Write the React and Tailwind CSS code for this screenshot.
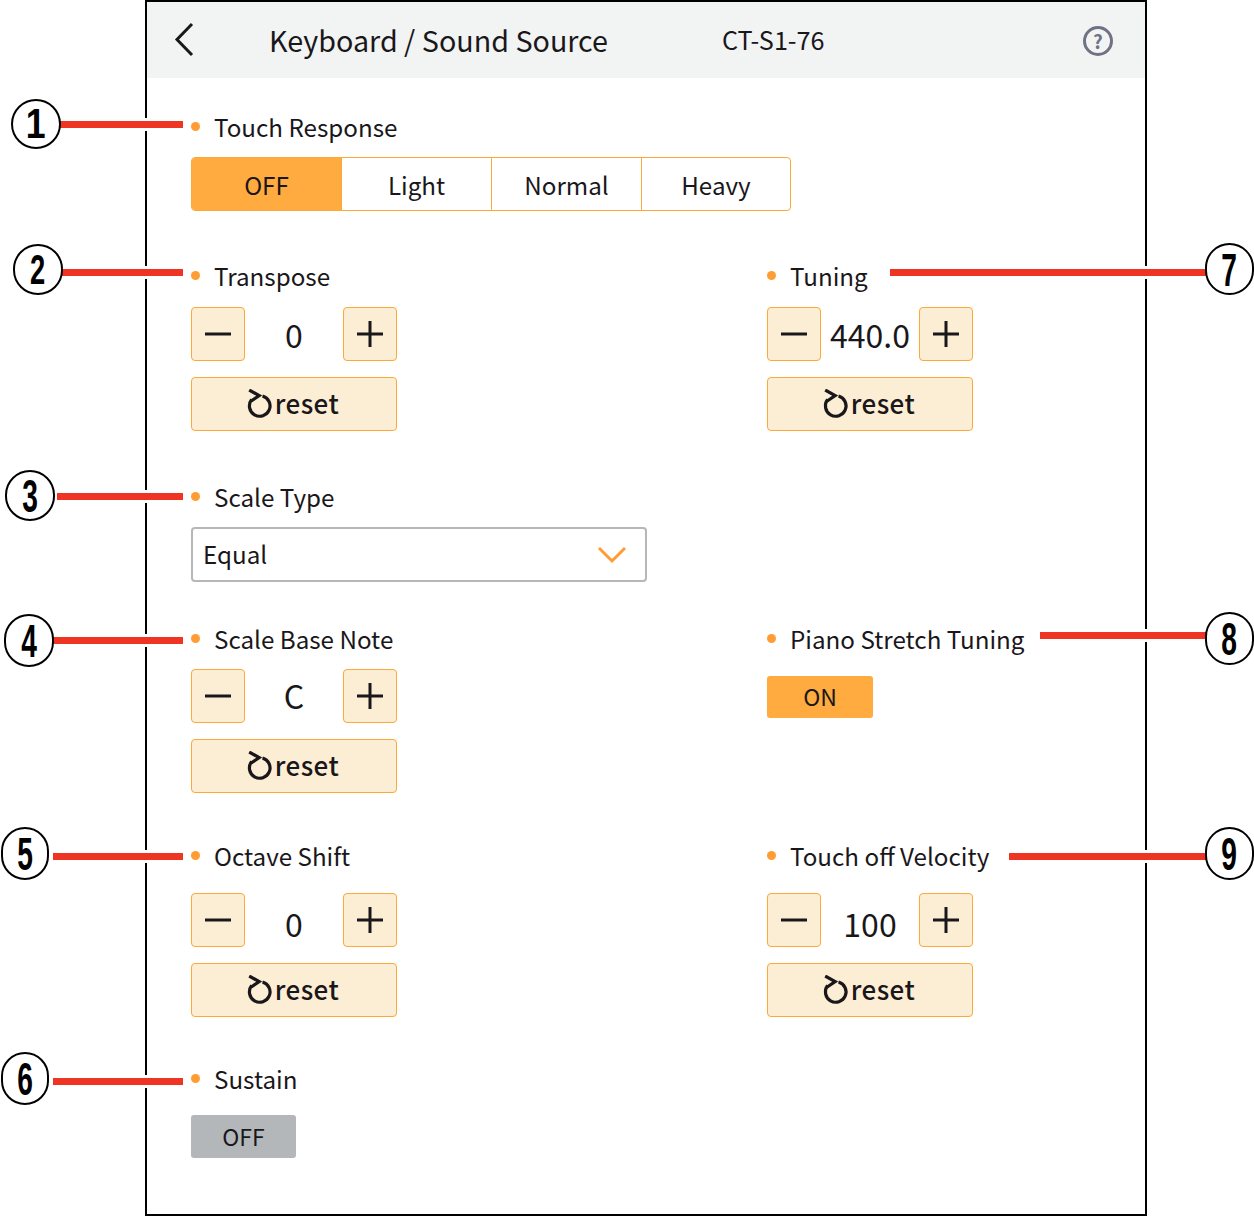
const FONT = "font-['Noto_Sans_CJK_JP','Noto_Sans',sans-serif]";

function Label({ children }) {
    return (
        <div className="flex h-[28px] items-center">
            <span className="mb-[4px] h-[9px] w-[9px] rounded-full bg-[#ff9c33]" />
            <span className="mb-[1px] ml-[14px] text-[24.2px] leading-none whitespace-nowrap">{children}</span>
        </div>
    );
}

function MinusIcon() {
    return (
        <svg width="28" height="28" viewBox="0 0 28 28" className="text-[#1a171b]">
            <path d="M1 14H27" stroke="currentColor" strokeWidth="3" fill="none" />
        </svg>
    );
}

function PlusIcon() {
    return (
        <svg width="28" height="28" viewBox="0 0 28 28" className="text-[#1a171b]">
            <path d="M1 14H27M14 1V27" stroke="currentColor" strokeWidth="3" fill="none" />
        </svg>
    );
}

function ResetIcon() {
    return (
        <svg width="26" height="30" viewBox="0 0 26 30" className="text-[#1a171b]">
            <path d="M4.6 10.6A10.3 10.3 0 1 0 15.5 7" stroke="currentColor" strokeWidth="3.2" fill="none" />
            <path d="M2.2 1L12.2 6.6L4.2 12" stroke="currentColor" strokeWidth="3.2" fill="none" />
        </svg>
    );
}

function Stepper({ value, valueClass = "" }) {
    return (
        <div className="w-[206px]">
            <div className="flex h-[54px] items-center justify-between">
                <button className="flex h-[54px] w-[54px] items-center justify-center rounded-[4px] border border-[#faa93a] bg-[#fceed5]">
                    <MinusIcon />
                </button>
                <span className={`text-[32px] leading-none ${valueClass}`}>{value}</span>
                <button className="flex h-[54px] w-[54px] items-center justify-center rounded-[4px] border border-[#faa93a] bg-[#fceed5]">
                    <PlusIcon />
                </button>
            </div>
            <button className="mt-[16px] flex h-[54px] w-[206px] items-center justify-center rounded-[4px] border border-[#faa93a] bg-[#fceed5]">
                <ResetIcon />
                <span className="mr-[2px] mb-[2px] ml-[2px] text-[26px] leading-none font-medium tracking-[0.4px]">reset</span>
            </button>
        </div>
    );
}

function Callout({ n, circle, line, digit }) {
    return (
        <>
            <div className={`absolute box-content h-[7px] border-y-[3px] border-white bg-[#ee3524] ${line}`} />
            <div className={`absolute flex items-center justify-center rounded-full border-2 border-black bg-white ${circle}`}>
                <span className={`font-['Liberation_Sans',sans-serif] leading-none font-bold text-black ${digit}`}>{n}</span>
            </div>
        </>
    );
}

export default function App() {
    return (
        <div className={`relative h-[1216px] w-[1254px] overflow-hidden bg-white text-[#1a171b] ${FONT}`}>
            <div className="ml-[145px] h-[1216px] w-[1002px] border-2 border-black">
                <header className="flex h-[76px] items-center bg-[#f2f4f4]">
                    <svg width="24" height="36" viewBox="0 0 24 36" className="ml-[25px]">
                        <path d="M20 2L5 17.5L20 33" stroke="#1a171b" strokeWidth="3" fill="none" />
                    </svg>
                    <h1 className="ml-[73px] w-[453px] text-[28.7px] leading-none font-normal whitespace-nowrap">Keyboard / Sound Source</h1>
                    <span className="text-[25.2px] leading-none">CT-S1-76</span>
                    <span className="mt-[1px] mr-[32px] ml-auto flex h-[30px] w-[30px] items-center justify-center rounded-full border-[3px] border-[#6f7285] text-[19px] leading-none font-bold text-[#6f7285]">?</span>
                </header>

                <main className="pl-[44px]">
                    <section className="pt-[36px]">
                        <Label>Touch Response</Label>
                        <div className="mt-[15px] flex h-[54px] w-[600px] overflow-hidden rounded-[4px] border border-[#faa93a] text-[24.2px]">
                            <div className="flex w-[149px] items-center justify-center bg-[#ffab3f] pt-[2px]">OFF</div>
                            <div className="flex w-[150px] items-center justify-center border-l border-[#faa93a] pt-[2px]">Light</div>
                            <div className="flex w-[150px] items-center justify-center border-l border-[#faa93a] pt-[2px]">Normal</div>
                            <div className="flex flex-1 items-center justify-center border-l border-[#faa93a] pt-[2px]">Heavy</div>
                        </div>
                    </section>

                    <section className="grid grid-cols-[576px_1fr] pt-[52px]">
                        <div>
                            <Label>Transpose</Label>
                            <div className="mt-[16px]"><Stepper value="0" /></div>
                        </div>
                        <div>
                            <Label>Tuning</Label>
                            <div className="mt-[16px]"><Stepper value="440.0" /></div>
                        </div>
                    </section>

                    <section className="pt-[53px]">
                        <Label>Scale Type</Label>
                        <div className="mt-[15px] flex h-[55px] w-[456px] items-center justify-between rounded-[4px] border-2 border-[#b4b8ba] pr-[18px] pl-[10px] text-[24.2px]">
                            <span>Equal</span>
                            <svg width="30" height="20" viewBox="0 0 30 20">
                                <path d="M2 3L15 16L28 3" stroke="#ff9c33" strokeWidth="3" fill="none" />
                            </svg>
                        </div>
                    </section>

                    <section className="grid grid-cols-[576px_1fr] pt-[44px]">
                        <div>
                            <Label>Scale Base Note</Label>
                            <div className="mt-[15px]"><Stepper value="C" valueClass="mb-[2px]" /></div>
                        </div>
                        <div>
                            <Label>Piano Stretch Tuning</Label>
                            <div className="mt-[22px] flex h-[42px] w-[106px] items-center justify-center rounded-[3px] bg-[#ffab3f] pb-[1px] text-[23px]">ON</div>
                        </div>
                    </section>

                    <section className="grid grid-cols-[576px_1fr] pt-[50px]">
                        <div>
                            <Label>Octave Shift</Label>
                            <div className="mt-[22px]"><Stepper value="0" valueClass="mt-[6px]" /></div>
                        </div>
                        <div>
                            <Label>Touch off Velocity</Label>
                            <div className="mt-[22px]"><Stepper value="100" valueClass="mt-[6px]" /></div>
                        </div>
                    </section>

                    <section className="pt-[49px]">
                        <Label>Sustain</Label>
                        <div className="mt-[21px] flex h-[43px] w-[105px] items-center justify-center rounded-[3px] bg-[#b3b7ba] text-[23px]">OFF</div>
                    </section>
                </main>
            </div>

            <Callout n="1" circle="left-[11px] top-[99px] h-[50px] w-[50px]" line="left-[60px] top-[118px] w-[123px]" digit="text-[42px] scale-x-[0.85]" />
            <Callout n="2" circle="left-[13px] top-[244px] h-[51px] w-[50px]" line="left-[62px] top-[266px] w-[121px]" digit="text-[42px] scale-x-[0.65]" />
            <Callout n="3" circle="left-[5px] top-[470px] h-[51px] w-[50px]" line="left-[57px] top-[490px] w-[126px]" digit="text-[47px] scale-x-[0.6]" />
            <Callout n="4" circle="left-[4px] top-[614px] h-[53px] w-[50px]" line="left-[53px] top-[634px] w-[130px]" digit="text-[47px] scale-x-[0.6]" />
            <Callout n="5" circle="left-[1px] top-[827px] h-[53px] w-[48px]" line="left-[53px] top-[850px] w-[130px]" digit="text-[47px] scale-x-[0.6]" />
            <Callout n="6" circle="left-[1px] top-[1052px] h-[53px] w-[48px]" line="left-[53px] top-[1075px] w-[130px]" digit="text-[47px] scale-x-[0.6]" />
            <Callout n="7" circle="left-[1205px] top-[243px] h-[52px] w-[49px]" line="left-[890px] top-[266px] w-[316px]" digit="text-[47px] scale-x-[0.6]" />
            <Callout n="8" circle="left-[1205px] top-[612px] h-[53px] w-[49px]" line="left-[1040px] top-[629px] w-[166px]" digit="text-[47px] scale-x-[0.6]" />
            <Callout n="9" circle="left-[1205px] top-[827px] h-[53px] w-[49px]" line="left-[1009px] top-[850px] w-[197px]" digit="text-[47px] scale-x-[0.6]" />
        </div>
    );
}
